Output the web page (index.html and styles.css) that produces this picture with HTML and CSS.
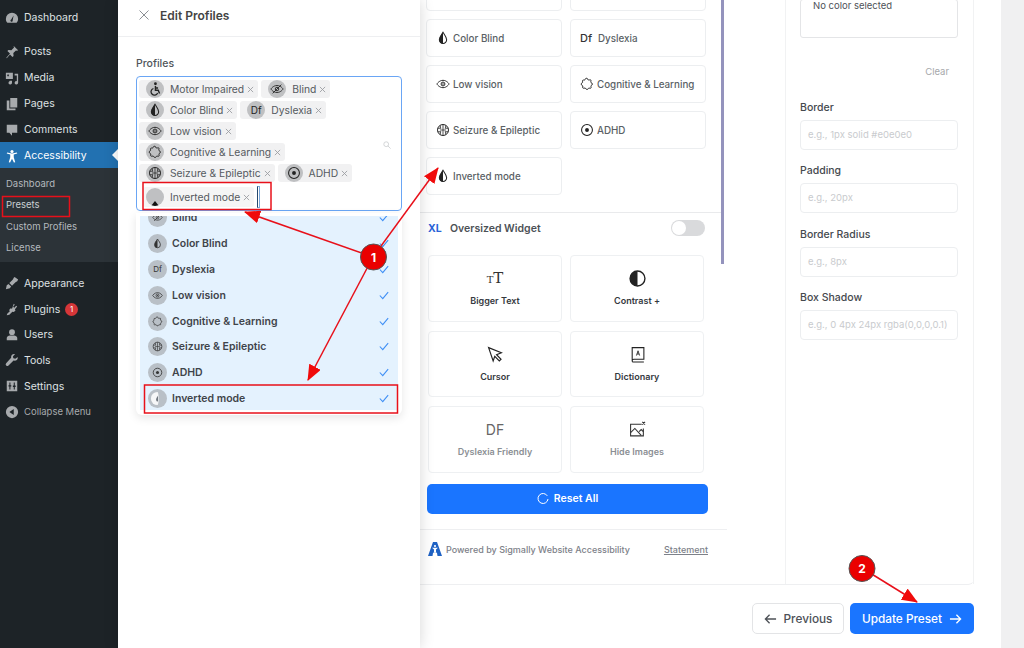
FILE: index.html
```html
<!DOCTYPE html>
<html lang="en">
  <head>
    <meta charset="UTF-8" />
    <meta name="viewport" content="width=device-width, initial-scale=1.0" />
    <title>Edit Profiles</title>
    <link rel="stylesheet" href="styles.css">
  </head>
  <body>
    <svg class="defs" width="0" height="0">
      <symbol id="i-wheel" viewBox="0 0 16 16"><circle cx="8.500" cy="2" r="1.600" fill="currentColor"/><path d="M8.500 4.500v5h3.200l1.500 3.600M8.500 6.800h3" fill="none" stroke="currentColor" stroke-width="1.600"/><path d="M6.200 7.400a3.900 3.900 0 1 0 4.800 5.200" fill="none" stroke="currentColor" stroke-width="1.400"/></symbol>
      <symbol id="i-eyeoff" viewBox="0 0 16 16"><path d="M1 8s2.600-4 7-4 7 4 7 4-2.600 4-7 4-7-4-7-4z" fill="none" stroke="currentColor" stroke-width="1"/><circle cx="8" cy="8" r="2" fill="none" stroke="currentColor"/><path d="M3 13 13 3" stroke="currentColor" stroke-width="1"/></symbol>
      <symbol id="i-drop" viewBox="0 0 16 16"><path d="M8 1.500C6 4.600 3.800 7 3.800 10a4.200 4.200 0 0 0 8.400 0C12.200 7 10 4.600 8 1.500z" fill="none" stroke="currentColor" stroke-width="1.200"/><path d="M8 1.500v12.700A4.200 4.200 0 0 1 3.800 10C3.800 7 6 4.600 8 1.500z" fill="currentColor"/></symbol>
      <symbol id="i-eye" viewBox="0 0 16 16"><path d="M1 8s2.600-4.200 7-4.200S15 8 15 8s-2.600 4.200-7 4.200S1 8 1 8z" fill="none" stroke="currentColor" stroke-width="1.100"/><circle cx="8" cy="8" r="2.200" fill="none" stroke="currentColor" stroke-width="1.100"/><circle cx="8" cy="8" r=".9" fill="currentColor"/></symbol>
      <symbol id="i-puzzle" viewBox="0 0 16 16"><path d="M6 2.200c1-1.400 3-.8 3 .8 0 .5 1.500.5 2.500.2.800-.2 1.200.5 1 1.300-.2.900-.4 1.800.3 2 1.600.3 1.900 2.600.2 3.100-.7.200-.5 1.200-.3 2 .2 1-.5 1.500-1.400 1.200-.9-.3-1.600-.3-1.800.4-.5 1.500-2.600 1.300-3-.1-.2-.6-1.200-.6-2.100-.3-1 .3-1.600-.4-1.300-1.300.3-.9.200-1.700-.5-1.900C1 9.200 1 7.100 2.500 6.700c.7-.2.500-1.100.4-1.900-.2-.9.400-1.500 1.300-1.300.7.200 1.400.1 1.800-1.300z" fill="none" stroke="currentColor" stroke-width="1.100"/></symbol>
      <symbol id="i-brain" viewBox="0 0 16 16"><circle cx="8" cy="8" r="6.300" fill="none" stroke="currentColor" stroke-width="1.100"/><path d="M8 1.700v12.600M2 6h4M10 6h4M2 10h4M10 10h4M5 2.800v3M11 2.800v3M5 10v3.200M11 10v3.200M4.500 8H8M8 8h3.500" fill="none" stroke="currentColor" stroke-width=".9"/></symbol>
      <symbol id="i-target" viewBox="0 0 16 16"><circle cx="8" cy="8" r="6.200" fill="none" stroke="currentColor" stroke-width="1.200"/><circle cx="8" cy="8" r="2.200" fill="currentColor"/></symbol>
      <symbol id="i-half" viewBox="0 0 16 16"><path d="M8 1a7 7 0 0 0 0 14c1.500 0 1.500-14 0-14z" fill="#f6f7f8"/><path d="M8.500 5c-1 1.600-2 2.800-2 4.200a2 2 0 0 0 2 2z" fill="#6d747c"/></symbol>
      <symbol id="i-check" viewBox="0 0 12 10"><path d="M1 5l3.500 3.800L11 1" fill="none" stroke="currentColor" stroke-width="1.300"/></symbol>
      <symbol id="i-x" viewBox="0 0 8 8"><path d="M1 1l6 6M7 1L1 7" stroke="currentColor" stroke-width="1"/></symbol>
    </svg>

    <div class="page">
      <nav class="sidebar">
        <a class="menu-item"><svg class="menu-icon" viewBox="0 0 16 16"><path d="M8 2a7 7 0 0 0-7 7c0 1.800.7 3.300 1.700 4.500h10.600A7 7 0 0 0 15 9a7 7 0 0 0-7-7zm.8 8.700a1.300 1.300 0 1 1-1.700-.9L9.800 5z" fill="currentColor"/></svg>Dashboard</a>
        <a class="menu-item gap"><svg class="menu-icon" viewBox="0 0 16 16"><path d="M10 1l5 5-1.300.6-1.200-.4-3 3 .3 3.300-1.300 1.300-2.800-3L2 15l-.5-.5 4.200-4.800-3-2.800L4 5.600l3.300.3 3-3-.4-1.200z" fill="currentColor"/></svg>Posts</a>
        <a class="menu-item"><svg class="menu-icon" viewBox="0 0 16 16"><path d="M1 2h8v7H1zm2.500 2a1 1 0 1 0 .01 0zM11 3h4v10.500a2 2 0 1 1-1.500-1.900V5H11zM5 11h3v2.500A2 2 0 1 1 6.500 11.600z" fill="currentColor" fill-rule="evenodd"/></svg>Media</a>
        <a class="menu-item"><svg class="menu-icon" viewBox="0 0 16 16"><path d="M6 1h8v11H6zM2 4h3v9h7v2H2z" fill="currentColor"/></svg>Pages</a>
        <a class="menu-item"><svg class="menu-icon" viewBox="0 0 16 16"><path d="M2 2h12v9H8v3.500L5 11H2z" fill="currentColor"/></svg>Comments</a>
        <a class="menu-item active"><svg class="menu-icon" viewBox="0 0 16 16"><circle cx="8" cy="2.800" r="1.800" fill="currentColor"/><path d="M2 5.200l4 1.200v3L4.300 15l1.500.5L8 11l2.200 4.500 1.500-.5-1.700-5.600v-3l4-1.200-.4-1.300L8 5.200 2.400 3.900z" fill="currentColor"/></svg>Accessibility</a>
        <div class="submenu">
          <a>Dashboard</a>
          <a class="current">Presets</a>
          <a>Custom Profiles</a>
          <a>License</a>
        </div>
        <a class="menu-item gap"><svg class="menu-icon" viewBox="0 0 16 16"><path d="M11 1l4 3-1 2-2 1-4 4-3-3 4-4 1-2zM4 9l3 3-1.500 2L1 15l1-4.500z" fill="currentColor"/></svg>Appearance</a>
        <a class="menu-item"><svg class="menu-icon" viewBox="0 0 16 16"><path d="M10 2l1.200 1-2 2.500 1.500 1.200 2-2.500 1.200 1-2.500 3.200.5 1.500-2 1.600-1.500-.3L5 14.500l-3 .5.500-1.500 3-2.800-.8-1.500 1.800-2 1.500.5z" fill="currentColor"/></svg>Plugins<span class="count">1</span></a>
        <a class="menu-item"><svg class="menu-icon" viewBox="0 0 16 16"><circle cx="8" cy="4.800" r="3.300" fill="currentColor"/><path d="M2 14v-2.500C2 9.500 4 8.500 5.500 8.500h5c1.500 0 3.500 1 3.500 3V14z" fill="currentColor"/></svg>Users</a>
        <a class="menu-item"><svg class="menu-icon" viewBox="0 0 16 16"><path d="M14.500 4.500l-2.700 2.200-2.200-.6-.6-2.200L11.500 1.200C9 .4 6.500 2.300 7 5.500L1.300 11.800a1.800 1.800 0 0 0 2.700 2.500L9.800 8.700c3.100.7 5.300-1.600 4.700-4.200z" fill="currentColor"/></svg>Tools</a>
        <a class="menu-item"><svg class="menu-icon" viewBox="0 0 16 16"><path d="M2 2h12v12H2zm3 2v3H4v1.500h1V12h1.200V8.500h1V7h-1V4zm5 0v3.500H9V9h1v3h1.200V9h1V7.500h-1V4z" fill="currentColor" fill-rule="evenodd"/></svg>Settings</a>
        <a class="menu-item muted"><svg class="menu-icon" viewBox="0 0 16 16"><path d="M8 1a7 7 0 1 0 0 14A7 7 0 0 0 8 1zm2 3.500v7L5 8z" fill="currentColor" fill-rule="evenodd"/></svg>Collapse Menu</a>
      </nav>

      <section class="edit-panel">
        <header class="edit-head">
          <svg class="close" viewBox="0 0 10 10"><path d="M.5.500l9 9M9.500.500l-9 9" stroke="currentColor"/></svg>
          <h2>Edit Profiles</h2>
        </header>
        <div class="edit-body">
          <label class="field-title">Profiles</label>
          <div class="select-box">
            <div class="tags">
              <div class="tag-row">
                <div class="tag"><span class="tag-ico"><svg><use href="#i-wheel"/></svg></span>Motor Impaired<svg class="tag-x"><use href="#i-x"/></svg></div>
                <div class="tag"><span class="tag-ico"><svg><use href="#i-eyeoff"/></svg></span>Blind<svg class="tag-x"><use href="#i-x"/></svg></div>
              </div>
              <div class="tag-row">
                <div class="tag"><span class="tag-ico"><svg><use href="#i-drop"/></svg></span>Color Blind<svg class="tag-x"><use href="#i-x"/></svg></div>
                <div class="tag"><span class="tag-ico df">Df</span>Dyslexia<svg class="tag-x"><use href="#i-x"/></svg></div>
              </div>
              <div class="tag-row">
                <div class="tag"><span class="tag-ico"><svg><use href="#i-eye"/></svg></span>Low vision<svg class="tag-x"><use href="#i-x"/></svg></div>
              </div>
              <div class="tag-row">
                <div class="tag"><span class="tag-ico"><svg><use href="#i-puzzle"/></svg></span>Cognitive &amp; Learning<svg class="tag-x"><use href="#i-x"/></svg></div>
              </div>
              <div class="tag-row">
                <div class="tag"><span class="tag-ico"><svg><use href="#i-brain"/></svg></span>Seizure &amp; Epileptic<svg class="tag-x"><use href="#i-x"/></svg></div>
                <div class="tag"><span class="tag-ico"><svg><use href="#i-target"/></svg></span>ADHD<svg class="tag-x"><use href="#i-x"/></svg></div>
              </div>
              <div class="tag-row last-row">
                <div class="tag last"><span class="tag-ico inverted"></span>Inverted mode<svg class="tag-x"><use href="#i-x"/></svg></div>
                <span class="caret"></span>
              </div>
            </div>
            <svg class="search" viewBox="0 0 10 10"><circle cx="4" cy="4" r="3" fill="none" stroke="currentColor"/><path d="M6.200 6.200 9.500 9.500" stroke="currentColor"/></svg>
          </div>
          <div class="dropdown">
            <ul class="options">
              <li class="clipped"><span class="opt-ico"><svg><use href="#i-eyeoff"/></svg></span>Blind<svg class="tick"><use href="#i-check"/></svg></li>
              <li><span class="opt-ico"><svg><use href="#i-drop"/></svg></span>Color Blind<svg class="tick"><use href="#i-check"/></svg></li>
              <li><span class="opt-ico df">Df</span>Dyslexia<svg class="tick"><use href="#i-check"/></svg></li>
              <li><span class="opt-ico"><svg><use href="#i-eye"/></svg></span>Low vision<svg class="tick"><use href="#i-check"/></svg></li>
              <li><span class="opt-ico"><svg><use href="#i-puzzle"/></svg></span>Cognitive &amp; Learning<svg class="tick"><use href="#i-check"/></svg></li>
              <li><span class="opt-ico"><svg><use href="#i-brain"/></svg></span>Seizure &amp; Epileptic<svg class="tick"><use href="#i-check"/></svg></li>
              <li><span class="opt-ico"><svg><use href="#i-target"/></svg></span>ADHD<svg class="tick"><use href="#i-check"/></svg></li>
              <li><span class="opt-ico half"><svg><use href="#i-half"/></svg></span>Inverted mode<svg class="tick"><use href="#i-check"/></svg></li>
            </ul>
          </div>
        </div>
      </section>

      <main class="main">
        <div class="main-top">
          <section class="widget">
            <div class="profile-grid">
              <div class="p-card"></div>
              <div class="p-card"></div>
              <div class="p-card"><svg><use href="#i-drop"/></svg>Color Blind</div>
              <div class="p-card"><span class="df-mark">Df</span>Dyslexia</div>
              <div class="p-card"><svg><use href="#i-eye"/></svg>Low vision</div>
              <div class="p-card"><svg><use href="#i-puzzle"/></svg>Cognitive &amp; Learning</div>
              <div class="p-card"><svg><use href="#i-brain"/></svg>Seizure &amp; Epileptic</div>
              <div class="p-card"><svg><use href="#i-target"/></svg>ADHD</div>
              <div class="p-card"><svg><use href="#i-drop"/></svg>Inverted mode</div>
            </div>
            <div class="oversized">
              <span class="xl">XL</span>
              <span class="oversized-title">Oversized Widget</span>
              <span class="toggle"></span>
            </div>
            <div class="tool-grid">
              <div class="tool"><span class="tool-glyph serif"><small>T</small>T</span>Bigger Text</div>
              <div class="tool"><svg viewBox="0 0 16 16"><circle cx="8" cy="8" r="7" fill="none" stroke="currentColor" stroke-width="1.300"/><path d="M8 1a7 7 0 0 0 0 14z" fill="currentColor"/></svg>Contrast +</div>
              <div class="tool"><svg viewBox="0 0 16 16"><path d="M1.500 1.500l12 4.800-4.500 1.800 4.200 4.400-1.600 1.600L7.300 9.800 5.800 14z" fill="none" stroke="currentColor" stroke-width="1.100"/></svg>Cursor</div>
              <div class="tool"><svg viewBox="0 0 16 16"><path d="M3 1.500h11v11H4.500A1.500 1.500 0 0 0 3 14zM3 14a1 1 0 0 0 1 1h10" fill="none" stroke="currentColor" stroke-width="1"/><path d="M7 9l1.500-4.500L10 9M7.500 7.500h2" fill="none" stroke="currentColor" stroke-width=".8"/></svg>Dictionary</div>
              <div class="tool faded"><span class="tool-glyph sans">DF</span>Dyslexia Friendly</div>
              <div class="tool faded"><svg viewBox="0 0 16 16"><path d="M12 3H1.500v11h12V7" fill="none" stroke="#333" stroke-width="1"/><path d="M1.500 11l4-4 6 6.500M9.500 10l2-2 2 2" fill="none" stroke="#333" stroke-width="1"/><path d="M12.500.8l2.600 2.600M15.100.8l-2.600 2.600" stroke="#333" stroke-width="1"/></svg>Hide Images</div>
            </div>
            <button class="reset"><svg viewBox="0 0 12 12"><path d="M10.300 2.900A5 5 0 1 0 11 6" fill="none" stroke="currentColor" stroke-width="1"/></svg>Reset All</button>
            <footer class="powered">
              <svg class="logo" viewBox="0 0 14 14"><path d="M5 0h4l5 14H9.500L9 11H5l-.5 3H0z" fill="#1f62c4"/><circle cx="7" cy="4" r="1.100" fill="#fff"/><path d="M4 5.700h6L8 7.500v2l1 3H8L7 10l-1 2.500H5l1-3v-2z" fill="#fff"/></svg>
              <span>Powered by Sigmally Website Accessibility</span>
              <a>Statement</a>
            </footer>
            <div class="scroll-thumb"></div>
          </section>

          <aside class="style-col">
            <div class="color-box">No color selected</div>
            <div class="clear">Clear</div>
            <label class="in-label first">Border</label>
            <div class="in">e.g., 1px solid #e0e0e0</div>
            <label class="in-label">Padding</label>
            <div class="in">e.g., 20px</div>
            <label class="in-label">Border Radius</label>
            <div class="in">e.g., 8px</div>
            <label class="in-label">Box Shadow</label>
            <div class="in">e.g., 0 4px 24px rgba(0,0,0,0.1)</div>
          </aside>
        </div>
        <div class="actions">
          <button class="btn prev"><svg viewBox="0 0 14 12"><path d="M13 6H1.500M6 1.500 1.500 6 6 10.500" fill="none" stroke="currentColor" stroke-width="1.400"/></svg>Previous</button>
          <button class="btn update">Update Preset<svg viewBox="0 0 14 12"><path d="M1 6h11.500M8 1.500 12.500 6 8 10.500" fill="none" stroke="currentColor" stroke-width="1.400"/></svg></button>
        </div>
      </main>
      <div class="gutter"></div>
    </div>

    <!-- red tutorial marks drawn on top of the screenshot -->
    <svg class="marks" viewBox="0 0 1024 648">
      <defs>
        <marker id="head" markerWidth="16" markerHeight="13" refX="15" refY="6.500" orient="auto" markerUnits="userSpaceOnUse"><path d="M0 0 16 6.500 0 13z" fill="#f00b0b"/></marker>
      </defs>
      <g fill="none" stroke="#e8101a" stroke-width="1.500">
        <rect x="2.500" y="196.500" width="67" height="20"/>
        <rect x="143" y="182.500" width="128" height="27"/>
        <rect x="144.500" y="385" width="253" height="28"/>
        <path d="M373 257 245 212" marker-end="url(#head)"/>
        <path d="M373 257 438 168" marker-end="url(#head)"/>
        <path d="M373 257 308 380" marker-end="url(#head)"/>
        <path d="M862 568 917 602" marker-end="url(#head)"/>
      </g>
      <g font-family="Inter, sans-serif" font-size="12" font-weight="700" fill="#fff" text-anchor="middle">
        <circle cx="373.500" cy="257" r="13" fill="#ea0000" stroke="#555" stroke-width="1"/>
        <text x="373.500" y="261.500">1</text>
        <circle cx="862" cy="568.500" r="13" fill="#ea0000" stroke="#555" stroke-width="1"/>
        <text x="862" y="573">2</text>
      </g>
    </svg>
  </body>
</html>
```

FILE: styles.css
```css
* {
  margin: 0;
  padding: 0;
  box-sizing: border-box;
}
body {
  position: relative;
  width: 1024px;
  height: 648px;
  overflow: hidden;
  background: #fff;
  font-family: "Inter", "Noto Sans", sans-serif;
  color: #3a3f45;
}
.defs {
  position: absolute;
}
.page {
  display: flex;
  height: 648px;
}

/* admin menu */
.sidebar {
  width: 118px;
  flex-shrink: 0;
  padding-top: 4px;
  background: #1d2327;
  color: #d5d8da;
  font-size: 10.500px;
}
.menu-item {
  display: flex;
  align-items: center;
  gap: 5px;
  height: 26px;
  padding: 1px 0 0 5px;
  color: #dfe1e3;
}
.menu-item.gap {
  margin-top: 8px;
}
.submenu ~ .menu-item {
  height: 25.700px;
}
.menu-icon {
  width: 14px;
  height: 14px;
  flex-shrink: 0;
  color: #a7aaad;
}
.menu-item.active {
  position: relative;
  background: #2271b1;
  color: #fff;
}
.menu-item.active .menu-icon {
  color: #fff;
}
.menu-item.active::after {
  content: "";
  position: absolute;
  right: 0;
  top: 7px;
  border: 6px solid transparent;
  border-right-color: #fff;
}
.menu-item.muted {
  color: #a7aaad;
  font-size: 9.500px;
}
.count {
  width: 13px;
  height: 13px;
  border-radius: 50%;
  background: #d63638;
  color: #fff;
  font-size: 8px;
  line-height: 13px;
  text-align: center;
}
.submenu {
  display: flex;
  flex-direction: column;
  height: 94px;
  padding: 5px 0 0 6px;
  background: #2c3338;
  font-size: 9.500px;
  color: #b4b9be;
}
.submenu a {
  height: 21.400px;
  line-height: 21.400px;
}
.submenu a.current {
  color: #c9ced2;
}

/* edit profiles panel */
.edit-panel {
  position: relative;
  z-index: 2;
  width: 302px;
  flex-shrink: 0;
  background: #fff;
  box-shadow: 0 0 14px rgba(0, 0, 0, 0.16);
}
.edit-head {
  display: flex;
  align-items: center;
  gap: 11px;
  height: 37px;
  padding: 0 0 6px 21px;
  border-bottom: 1px solid #eeeff1;
}
.close {
  width: 10px;
  height: 10px;
  color: #8b8f94;
}
.edit-head h2 {
  font-size: 12px;
  font-weight: 600;
  color: #444;
}
.edit-body {
  padding: 20px 18px 0;
}
.field-title {
  display: block;
  height: 19px;
  font-size: 10.500px;
  font-weight: 500;
  color: #50555a;
}
.select-box {
  display: flex;
  height: 135px;
  padding: 3px 10px 0 2px;
  border: 1px solid #6aa6f5;
  border-radius: 4px;
}
.tags {
  display: flex;
  flex-direction: column;
  flex: 1;
  gap: 3px;
}
.tag-row {
  display: flex;
  gap: 3px;
}
.last-row {
  align-items: center;
  margin-top: 1px;
  padding-left: 4px;
}
.tag {
  display: flex;
  align-items: center;
  gap: 6px;
  height: 18px;
  padding: 0 4px 0 7px;
  border-radius: 3px;
  background: #f1f1f2;
  font-size: 10.300px;
  color: #555a60;
  white-space: nowrap;
}
.tag.last {
  height: 20px;
  padding-left: 3px;
  background: #f5f5f5;
}
.tag-ico {
  display: flex;
  align-items: center;
  justify-content: center;
  width: 18px;
  height: 18px;
  flex-shrink: 0;
  border-radius: 50%;
  background: #bfc0c2;
  color: #222;
}
.tag-ico svg {
  width: 14px;
  height: 14px;
}
.tag-ico.df {
  font-size: 10px;
}
.tag-ico.inverted {
  position: relative;
  overflow: hidden;
}
.tag-ico.inverted::after {
  content: "";
  position: absolute;
  left: 5px;
  bottom: 0;
  border: 4px solid transparent;
  border-bottom: 5px solid #111;
  border-top: 0;
}
.tag-x {
  width: 7px;
  height: 7px;
  margin-left: -3px;
  color: #9a9da1;
}
.caret {
  width: 3px;
  height: 22px;
  border: 1px solid #7aa7da;
  border-left-color: #24496e;
}
.search {
  align-self: center;
  width: 8px;
  height: 8px;
  color: #c9cbce;
  flex-shrink: 0;
}
.dropdown {
  height: 202px;
  margin-top: 2px;
  padding: 3px 4px 0;
  border-radius: 0 0 6px 6px;
  background: #fff;
  box-shadow: 0 3px 10px rgba(0, 0, 0, 0.1);
}
.options {
  height: 194px;
  overflow: hidden;
  list-style: none;
  background: #e4f2fe;
}
.options li {
  display: flex;
  align-items: center;
  gap: 5px;
  height: 25.800px;
  padding: 0 9px 0 8px;
  font-size: 10.500px;
  font-weight: 600;
  color: #3f444a;
}
.options li.clipped {
  margin-top: -11px;
}
.opt-ico {
  display: flex;
  align-items: center;
  justify-content: center;
  width: 19px;
  height: 19px;
  flex-shrink: 0;
  border-radius: 50%;
  background: #b9c0c7;
  color: #333;
}
.opt-ico svg {
  width: 11px;
  height: 11px;
}
.opt-ico.df {
  font-size: 8px;
  font-weight: 400;
}
.opt-ico.half svg {
  width: 15px;
  height: 15px;
}
.tick {
  width: 10px;
  height: 9px;
  margin-left: auto;
  color: #3f8ff5;
}

/* main area */
.main {
  flex: 1;
  display: flex;
  flex-direction: column;
}
.main-top {
  display: flex;
  height: 585px;
  margin-right: 27px;
  border-bottom: 1px solid #eeeff1;
  border-bottom-right-radius: 6px;
}
.widget {
  position: relative;
  width: 307px;
  flex-shrink: 0;
}
.scroll-thumb {
  position: absolute;
  top: 0;
  right: 3px;
  width: 3px;
  height: 264px;
  background: #9493bd;
}
.profile-grid {
  display: grid;
  grid-template-columns: 136px 136px;
  grid-auto-rows: 38px;
  gap: 8px;
  height: 240px;
  margin: -27px 4px 0 0;
  padding-left: 6px;
  border-bottom: 1px solid #e9eaec;
}
.p-card {
  display: flex;
  align-items: center;
  gap: 3px;
  padding-left: 9px;
  border: 1px solid #eceef0;
  border-radius: 4px;
  background: #fff;
  font-size: 9.800px;
  font-weight: 500;
  color: #5a5f65;
}
.p-card svg {
  width: 14px;
  height: 14px;
  flex-shrink: 0;
  color: #222;
}
.df-mark {
  width: 15px;
  font-size: 11px;
  color: #333;
}
.oversized {
  display: flex;
  align-items: center;
  height: 30px;
  padding: 0 22px 0 8px;
  font-size: 10.500px;
  font-weight: 600;
  color: #4c5156;
}
.xl {
  width: 22px;
  color: #2a63d8;
  font-size: 10.500px;
  font-weight: 700;
}
.toggle {
  position: relative;
  width: 34px;
  height: 16px;
  margin-left: auto;
  border-radius: 8px;
  background: #d9dadc;
}
.toggle::after {
  content: "";
  position: absolute;
  left: 1px;
  top: 1px;
  width: 14px;
  height: 14px;
  border-radius: 50%;
  background: #fff;
}
.tool-grid {
  display: grid;
  grid-template-columns: 134px 134px;
  grid-auto-rows: 66.500px;
  gap: 9px 8px;
  margin: 12px 0 0 8px;
}
.tool {
  display: flex;
  flex-direction: column;
  align-items: center;
  justify-content: center;
  gap: 8px;
  border: 1px solid #eef0f2;
  border-radius: 4px;
  font-size: 9px;
  font-weight: 600;
  color: #35393e;
}
.tool svg {
  width: 17px;
  height: 17px;
  color: #222;
}
.tool.faded {
  color: #8b8f94;
}
.tool-glyph {
  height: 17px;
  line-height: 17px;
  color: #333;
}
.tool-glyph.serif {
  font-family: "DejaVu Serif", "Liberation Serif", serif;
  font-size: 15px;
  font-weight: 400;
}
.tool-glyph.serif small {
  font-size: 10px;
}
.tool-glyph.sans {
  font-size: 14px;
  font-weight: 400;
  color: #666;
}
.reset {
  display: flex;
  align-items: center;
  justify-content: center;
  gap: 5px;
  width: 281px;
  height: 30px;
  margin: 11px 0 0 7px;
  border: 0;
  border-radius: 5px;
  background: #1a75ff;
  color: #fff;
  font: 600 10.500px "Inter", sans-serif;
}
.reset svg {
  width: 12px;
  height: 12px;
}
.powered {
  display: flex;
  align-items: center;
  height: 40px;
  margin-top: 15px;
  padding: 0 19px 0 8px;
  border-top: 1px solid #eeeff1;
  font-size: 9px;
  font-weight: 500;
  color: #7d8189;
}
.logo {
  width: 14px;
  height: 14px;
  margin-right: 4px;
}
.powered a {
  margin-left: auto;
  text-decoration: underline;
}

/* right column of style inputs */
.style-col {
  width: 189px;
  margin-left: 58px;
  padding: 0 15px 0 14px;
  border: solid #f1f2f3;
  border-width: 0 1px;
}
.color-box {
  height: 39px;
  margin-top: -1px;
  padding: 0 12px;
  border: 1px solid #e4e5e7;
  border-radius: 3px;
  font-size: 9.500px;
  color: #4e5258;
  line-height: 12px;
}
.clear {
  height: 12px;
  margin-top: 28px;
  padding-right: 9px;
  text-align: right;
  font-size: 9.500px;
  color: #a6a8ab;
}
.in-label {
  display: block;
  height: 19px;
  margin-top: 14.500px;
  font-size: 10.500px;
  font-weight: 500;
  color: #45494e;
  line-height: 13px;
}
.in-label.first {
  margin-top: 22.500px;
}
.in {
  height: 30px;
  padding-left: 7px;
  border: 1px solid #eceef0;
  border-radius: 4px;
  font-size: 9.500px;
  line-height: 28px;
  color: #c9cbce;
  white-space: nowrap;
}

.actions {
  display: flex;
  justify-content: flex-end;
  gap: 6px;
  padding: 18px 27px 0 0;
}
.btn {
  display: flex;
  align-items: center;
  justify-content: center;
  gap: 7px;
  height: 31px;
  border-radius: 5px;
  font: 500 11.800px "Inter", sans-serif;
}
.btn svg {
  width: 13px;
  height: 12px;
}
.prev {
  width: 92px;
  border: 1px solid #e3e4e6;
  background: #fff;
  color: #4d5157;
}
.update {
  width: 124px;
  border: 0;
  background: #1a75ff;
  color: #fff;
}
.gutter {
  width: 23px;
  flex-shrink: 0;
  background: #f0f0f1;
}

.marks {
  position: absolute;
  top: 0;
  left: 0;
  z-index: 5;
  width: 1024px;
  height: 648px;
}
```
